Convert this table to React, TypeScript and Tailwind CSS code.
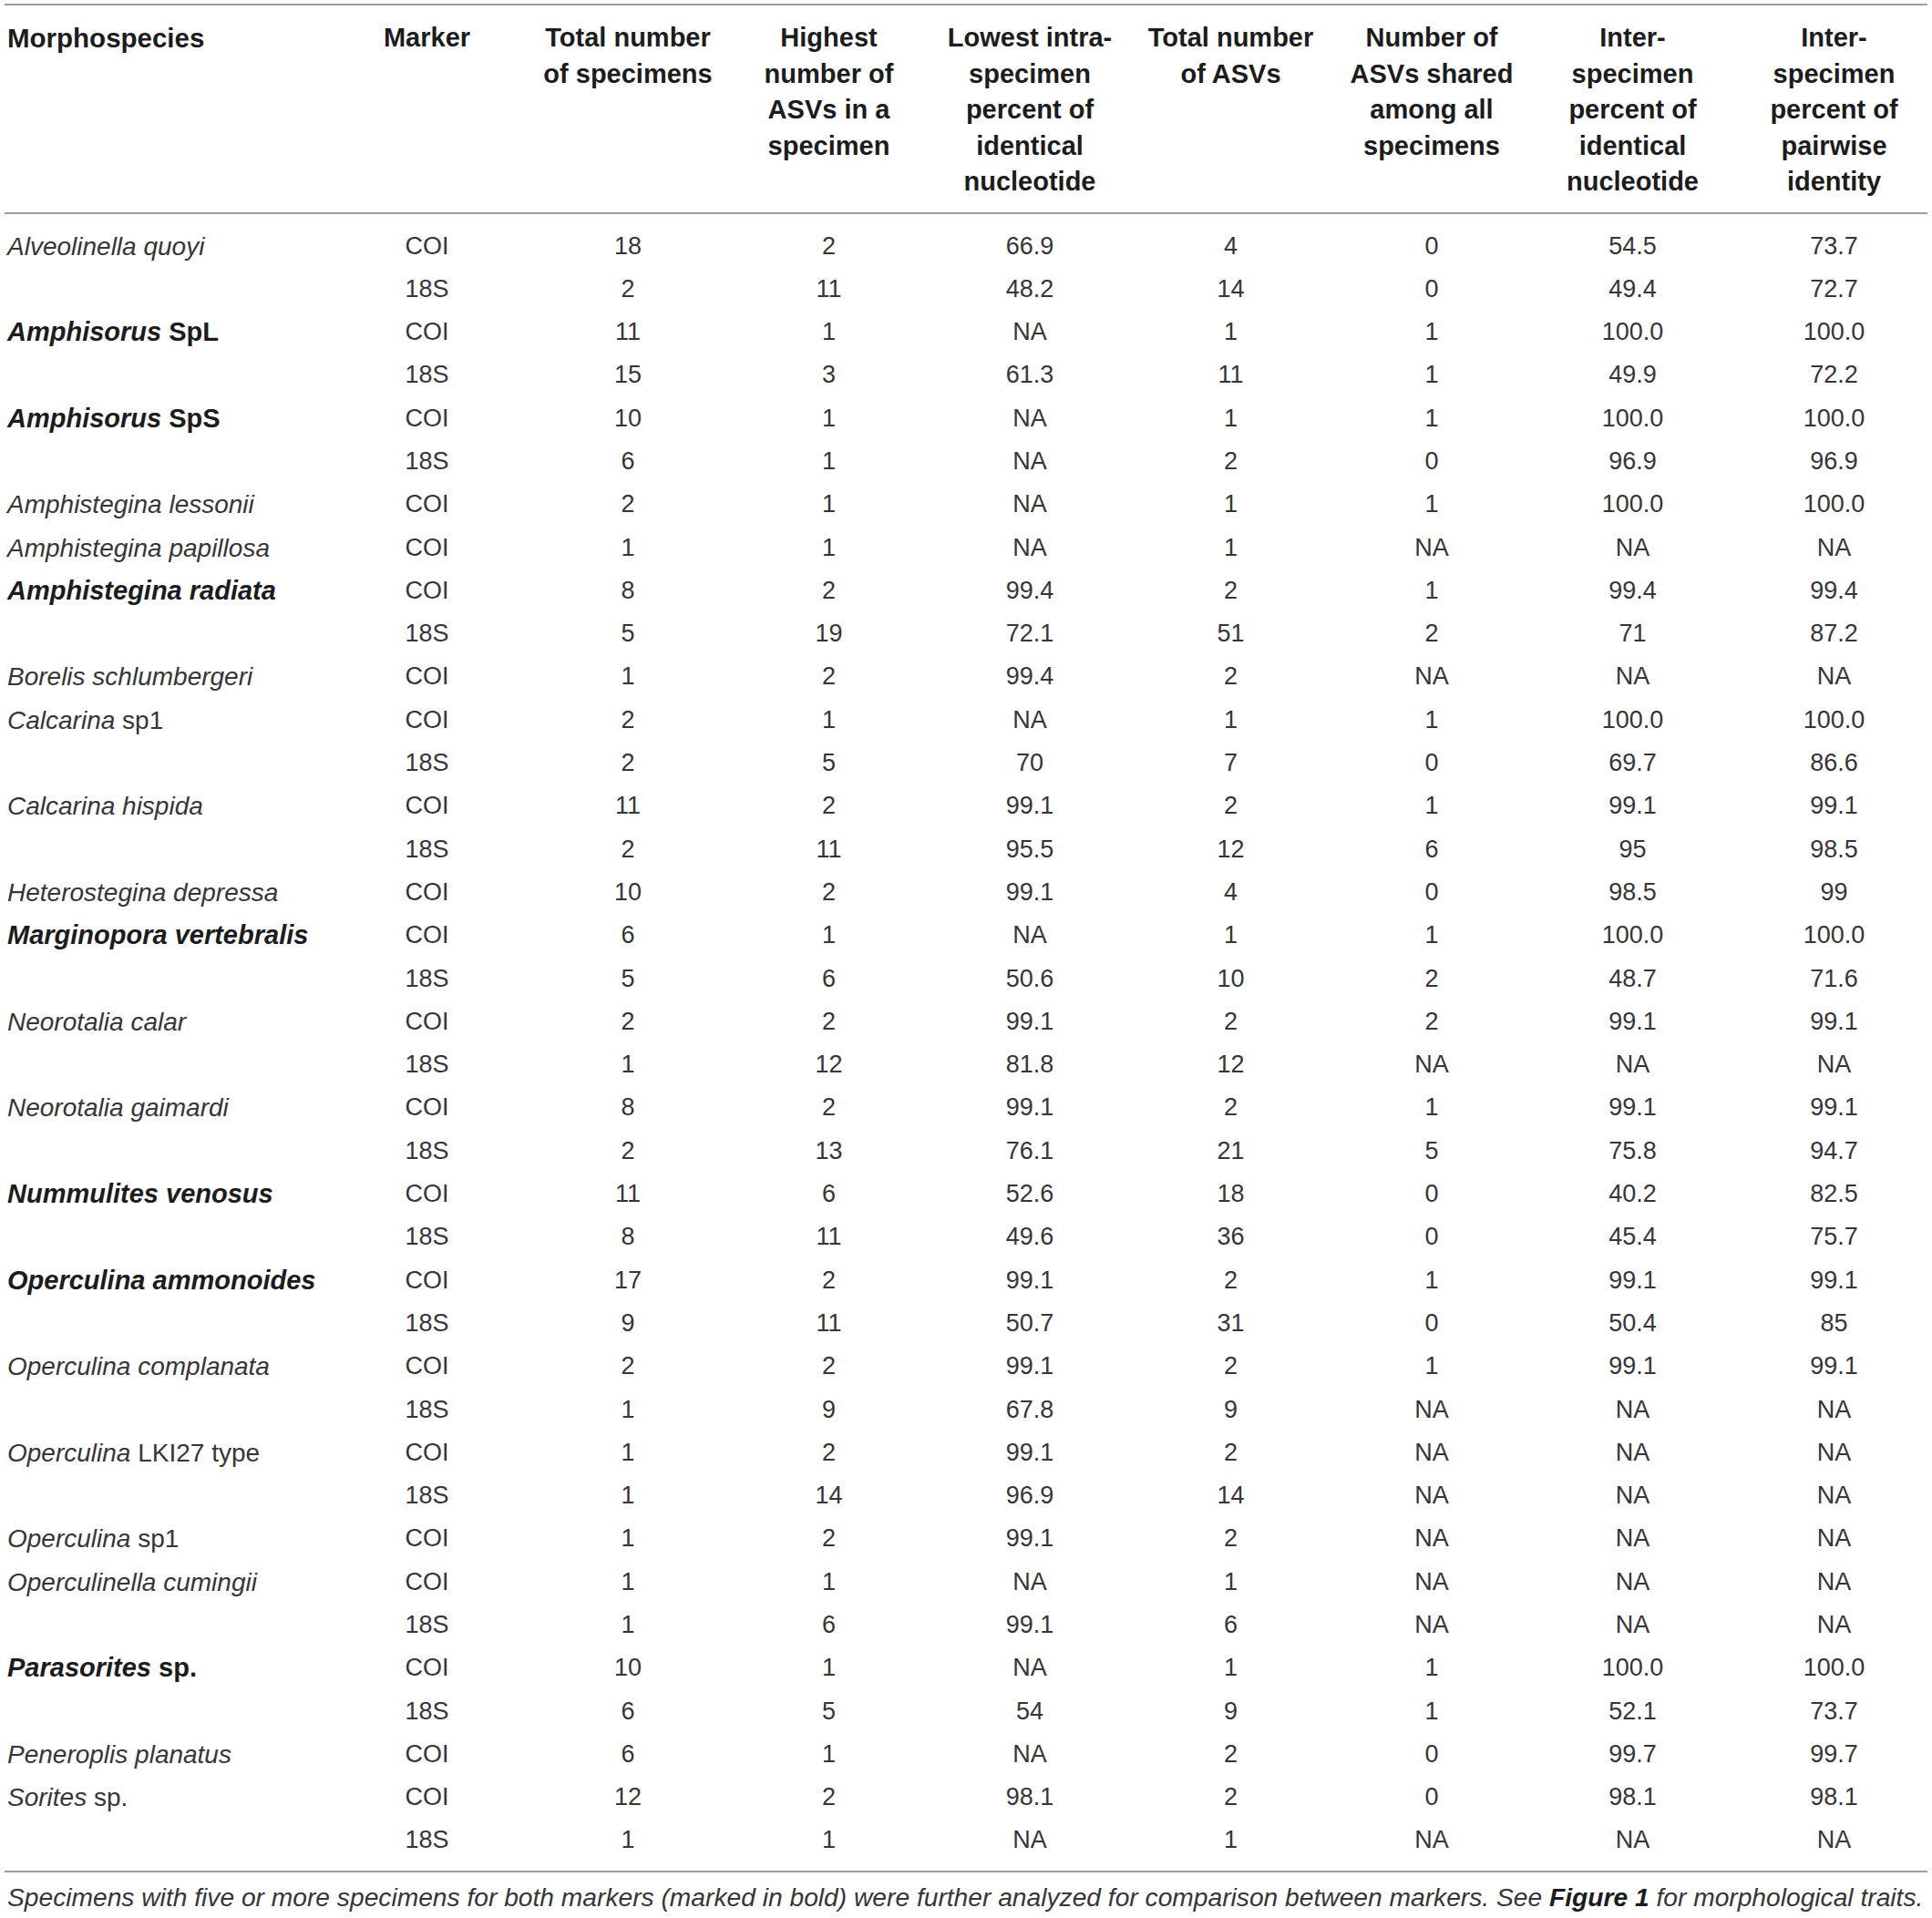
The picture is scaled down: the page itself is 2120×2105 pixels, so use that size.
type Seg = [string, boolean]

interface Row {
  name?: Seg[]
  bold?: boolean
  cells: string[]
}

const headers: string[][] = [
  ['Marker'],
  ['Total number', 'of specimens'],
  ['Highest', 'number of', 'ASVs in a', 'specimen'],
  ['Lowest intra-', 'specimen', 'percent of', 'identical', 'nucleotide'],
  ['Total number', 'of ASVs'],
  ['Number of', 'ASVs shared', 'among all', 'specimens'],
  ['Inter-', 'specimen', 'percent of', 'identical', 'nucleotide'],
  ['Inter-', 'specimen', 'percent of', 'pairwise', 'identity'],
]

const it = (s: string): Seg => [s, true]
const up = (s: string): Seg => [s, false]

const rows: Row[] = [
  { name: [it('Alveolinella quoyi')], cells: ['COI', '18', '2', '66.9', '4', '0', '54.5', '73.7'] },
  { cells: ['18S', '2', '11', '48.2', '14', '0', '49.4', '72.7'] },
  { name: [it('Amphisorus'), up(' SpL')], bold: true, cells: ['COI', '11', '1', 'NA', '1', '1', '100.0', '100.0'] },
  { cells: ['18S', '15', '3', '61.3', '11', '1', '49.9', '72.2'] },
  { name: [it('Amphisorus'), up(' SpS')], bold: true, cells: ['COI', '10', '1', 'NA', '1', '1', '100.0', '100.0'] },
  { cells: ['18S', '6', '1', 'NA', '2', '0', '96.9', '96.9'] },
  { name: [it('Amphistegina lessonii')], cells: ['COI', '2', '1', 'NA', '1', '1', '100.0', '100.0'] },
  { name: [it('Amphistegina papillosa')], cells: ['COI', '1', '1', 'NA', '1', 'NA', 'NA', 'NA'] },
  { name: [it('Amphistegina radiata')], bold: true, cells: ['COI', '8', '2', '99.4', '2', '1', '99.4', '99.4'] },
  { cells: ['18S', '5', '19', '72.1', '51', '2', '71', '87.2'] },
  { name: [it('Borelis schlumbergeri')], cells: ['COI', '1', '2', '99.4', '2', 'NA', 'NA', 'NA'] },
  { name: [it('Calcarina'), up(' sp1')], cells: ['COI', '2', '1', 'NA', '1', '1', '100.0', '100.0'] },
  { cells: ['18S', '2', '5', '70', '7', '0', '69.7', '86.6'] },
  { name: [it('Calcarina hispida')], cells: ['COI', '11', '2', '99.1', '2', '1', '99.1', '99.1'] },
  { cells: ['18S', '2', '11', '95.5', '12', '6', '95', '98.5'] },
  { name: [it('Heterostegina depressa')], cells: ['COI', '10', '2', '99.1', '4', '0', '98.5', '99'] },
  { name: [it('Marginopora vertebralis')], bold: true, cells: ['COI', '6', '1', 'NA', '1', '1', '100.0', '100.0'] },
  { cells: ['18S', '5', '6', '50.6', '10', '2', '48.7', '71.6'] },
  { name: [it('Neorotalia calar')], cells: ['COI', '2', '2', '99.1', '2', '2', '99.1', '99.1'] },
  { cells: ['18S', '1', '12', '81.8', '12', 'NA', 'NA', 'NA'] },
  { name: [it('Neorotalia gaimardi')], cells: ['COI', '8', '2', '99.1', '2', '1', '99.1', '99.1'] },
  { cells: ['18S', '2', '13', '76.1', '21', '5', '75.8', '94.7'] },
  { name: [it('Nummulites venosus')], bold: true, cells: ['COI', '11', '6', '52.6', '18', '0', '40.2', '82.5'] },
  { cells: ['18S', '8', '11', '49.6', '36', '0', '45.4', '75.7'] },
  { name: [it('Operculina ammonoides')], bold: true, cells: ['COI', '17', '2', '99.1', '2', '1', '99.1', '99.1'] },
  { cells: ['18S', '9', '11', '50.7', '31', '0', '50.4', '85'] },
  { name: [it('Operculina complanata')], cells: ['COI', '2', '2', '99.1', '2', '1', '99.1', '99.1'] },
  { cells: ['18S', '1', '9', '67.8', '9', 'NA', 'NA', 'NA'] },
  { name: [it('Operculina'), up(' LKI27 type')], cells: ['COI', '1', '2', '99.1', '2', 'NA', 'NA', 'NA'] },
  { cells: ['18S', '1', '14', '96.9', '14', 'NA', 'NA', 'NA'] },
  { name: [it('Operculina'), up(' sp1')], cells: ['COI', '1', '2', '99.1', '2', 'NA', 'NA', 'NA'] },
  { name: [it('Operculinella cumingii')], cells: ['COI', '1', '1', 'NA', '1', 'NA', 'NA', 'NA'] },
  { cells: ['18S', '1', '6', '99.1', '6', 'NA', 'NA', 'NA'] },
  { name: [it('Parasorites'), up(' sp.')], bold: true, cells: ['COI', '10', '1', 'NA', '1', '1', '100.0', '100.0'] },
  { cells: ['18S', '6', '5', '54', '9', '1', '52.1', '73.7'] },
  { name: [it('Peneroplis planatus')], cells: ['COI', '6', '1', 'NA', '2', '0', '99.7', '99.7'] },
  { name: [it('Sorites'), up(' sp.')], cells: ['COI', '12', '2', '98.1', '2', '0', '98.1', '98.1'] },
  { cells: ['18S', '1', '1', 'NA', '1', 'NA', 'NA', 'NA'] },
]

const colWidths = ['w-[221px]', 'w-[220px]', 'w-[221px]', 'w-[220px]', 'w-[221px]', 'w-[220px]', 'w-[221px]', 'w-[213px]']

export default function App() {
  return (
    <div className="min-h-[2105px] bg-white pt-[4px] font-['Liberation_Sans',Arial,sans-serif] text-[#363636]">
      <table className="ml-[5px] w-[2110px] table-fixed border-collapse border-t-2 border-b-2 border-[#9c9c9c]">
        <colgroup>
          <col className="w-[353px]" />
          {colWidths.map((w, i) => (
            <col key={i} className={w} />
          ))}
        </colgroup>
        <thead>
          <tr className="border-b-2 border-[#9c9c9c]">
            <th className="pl-[3px] pt-[16px] pb-[13px] text-left align-top text-[29.5px] font-bold leading-[39.5px] text-[#1c1c1c]">
              Morphospecies
            </th>
            {headers.map((lines, i) => (
              <th
                key={i}
                className={`pt-[16px] pb-[13px] text-center align-top text-[29px] font-bold leading-[39.5px] text-[#1c1c1c] ${
                  i === headers.length - 1 ? 'pl-[8px]' : ''
                }`}
              >
                {lines.map((l, j) => (
                  <div key={j} className="whitespace-nowrap">
                    {l}
                  </div>
                ))}
              </th>
            ))}
          </tr>
        </thead>
        <tbody className="text-[27px] leading-[47.3px]">
          <tr className="h-[13px]">
            <td colSpan={9} />
          </tr>
          {rows.map((r, i) => (
            <tr key={i}>
              <td
                className={`whitespace-nowrap pl-[3px] ${
                  r.bold ? 'text-[29px] font-bold text-[#1c1c1c]' : 'text-[28px]'
                }`}
              >
                {r.name?.map(([t, ital], k) => (
                  <span key={k} className={ital ? 'italic' : ''}>
                    {t}
                  </span>
                ))}
              </td>
              {r.cells.map((c, k) => (
                <td key={k} className={`text-center ${k === r.cells.length - 1 ? 'pl-[8px]' : ''}`}>
                  {c}
                </td>
              ))}
            </tr>
          ))}
          <tr className="h-[10px]">
            <td colSpan={9} />
          </tr>
        </tbody>
      </table>
      <p className="mt-[9px] pl-[8px] text-[28.2px] italic leading-[36px] whitespace-nowrap">
        Specimens with five or more specimens for both markers (marked in bold) were further analyzed for
        comparison between markers. See <span className="font-bold text-[#1c1c1c]">Figure 1</span> for
        morphological traits.
      </p>
    </div>
  )
}
